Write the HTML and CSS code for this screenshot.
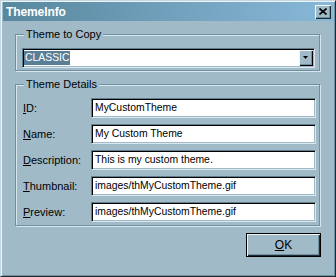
FILE: index.html
```html
<!DOCTYPE html>
<html>
<head>
<meta charset="utf-8">
<link rel="stylesheet" href="styles.css">
</head>
<body>
<div class="window">
  <div class="titlebar">
    <span class="title">ThemeInfo</span>
    <span class="close">
      <svg width="8" height="7" viewBox="0 0 8 7"><path d="M0.5 0.5 L7.5 6.5 M7.5 0.5 L0.5 6.5" stroke="#000" stroke-width="1.6" fill="none"/></svg>
    </span>
  </div>
  <div class="body">
    <div class="group group-copy">
      <div class="group-title">Theme to Copy</div>
      <div class="group-inner copy-inner">
        <div class="select">
          <span class="select-value"><span class="sel">CLASSIC</span></span>
          <span class="drop"><svg width="5" height="3" viewBox="0 0 5 3"><path d="M0 0 H5 L2.5 3 Z" fill="#000"/></svg></span>
        </div>
      </div>
    </div>
    <div class="group group-details">
      <div class="group-title">Theme Details</div>
      <div class="group-inner form">
        <span class="lbl"><u>I</u>D:</span><div class="input">MyCustomTheme</div>
        <span class="lbl"><u>N</u>ame:</span><div class="input">My Custom Theme</div>
        <span class="lbl"><u>D</u>escription:</span><div class="input">This is my custom theme.</div>
        <span class="lbl"><u>T</u>humbnail:</span><div class="input">images/thMyCustomTheme.gif</div>
        <span class="lbl"><u>P</u>review:</span><div class="input">images/thMyCustomTheme.gif</div>
      </div>
    </div>
    <div class="actions">
      <span class="btn"><u>O</u>K</span>
    </div>
  </div>
</div>
</body>
</html>
```

FILE: styles.css
```css
* { box-sizing: border-box; }
body {
  margin: 0;
  font-family: "Liberation Sans", Arial, sans-serif;
  font-size: 11px;
  color: #000;
}
.window {
  width: 336px;
  height: 277px;
  background: #a0bac8;
  border: 1px solid;
  border-color: #c4d6e0 #1e2a30 #1e2a30 #c4d6e0;
  box-shadow: inset 1px 1px 0 #eef5f8, inset -1px -1px 0 #6e90a2;
  padding: 1px 2px 2px;
  display: flex;
  flex-direction: column;
}
.titlebar {
  height: 19px;
  flex: none;
  display: flex;
  align-items: center;
  justify-content: space-between;
  padding: 0 2px 0 3px;
  background: linear-gradient(90deg, #58889e, #88b8d8);
}
.title {
  color: #fff;
  font-weight: bold;
  font-size: 12px;
  letter-spacing: -0.1px;
}
.close {
  width: 16px;
  height: 14px;
  background: #a0bac8;
  box-shadow: inset 1px 1px 0 #eef5f8, inset -1px -1px 0 #1e2a30, inset -2px -2px 0 #6e90a2;
  display: flex;
  align-items: center;
  justify-content: center;
  padding: 0 1px 1px 0;
}
.close svg { display: block; }
.body {
  flex: 1;
  padding: 0 13px 0 12px;
  display: flex;
  flex-direction: column;
}
.group {
  border: 1px solid #6e90a2;
  box-shadow: inset 1px 1px 0 #d8e6ee, 1px 1px 0 #d8e6ee;
}
.group-copy { margin-top: 13px; }
.group-details { margin-top: 13px; }
.group-title {
  width: fit-content;
  margin: -7px 0 0 8px;
  padding: 0 2px;
  line-height: 13px;
  background: #a0bac8;
}
.copy-inner {
  padding: 7px 4px 2px 6px;
}
.select {
  height: 20px;
  display: flex;
  background: #fff;
  border: 1px solid;
  border-color: #5f7f8f #dbe7ee #dbe7ee #5f7f8f;
  box-shadow: inset 1px 1px 0 #000, inset -1px -1px 0 #a0bac8;
  padding: 1px 1px 1px 1px;
  font-size: 10.4px;
}
.select-value {
  flex: 1;
  display: flex;
  align-items: center;
}
.sel {
  background: #5a7e96;
  color: #fff;
  line-height: 14px;
  padding: 0 1px 0 1px;
}
.drop {
  width: 14px;
  height: 16px;
  background: #a0bac8;
  box-shadow: inset 1px 1px 0 #eef5f8, inset -1px -1px 0 #000, inset -2px -2px 0 #6e90a2;
  display: flex;
  align-items: center;
  justify-content: center;
  padding: 0 1px 1px 0;
}
.drop svg { display: block; }
.form {
  padding: 7px 3px 3px 7px;
  display: grid;
  grid-template-columns: 68px 225px;
  grid-auto-rows: 20px;
  row-gap: 6px;
  align-items: center;
}
.lbl { line-height: 13px; }
.input {
  height: 20px;
  background: #fff;
  border: 1px solid;
  border-color: #5f7f8f #dbe7ee #dbe7ee #5f7f8f;
  box-shadow: inset 1px 1px 0 #000, inset -1px -1px 0 #a0bac8;
  padding: 0 2px 0 3px;
  line-height: 18px;
  font-size: 10.4px;
  white-space: nowrap;
  overflow: hidden;
}
.actions {
  margin-top: 7px;
  display: flex;
  justify-content: flex-end;
  margin-right: -1px;
}
.btn {
  width: 75px;
  height: 24px;
  border: 1px solid #000;
  background: #a0bac8;
  box-shadow: inset 1px 1px 0 #eef5f8, inset -1px -1px 0 #1e2a30, inset -2px -2px 0 #6e90a2;
  display: flex;
  align-items: center;
  justify-content: center;
  font-size: 12px;
  padding-bottom: 1px;
}
```
